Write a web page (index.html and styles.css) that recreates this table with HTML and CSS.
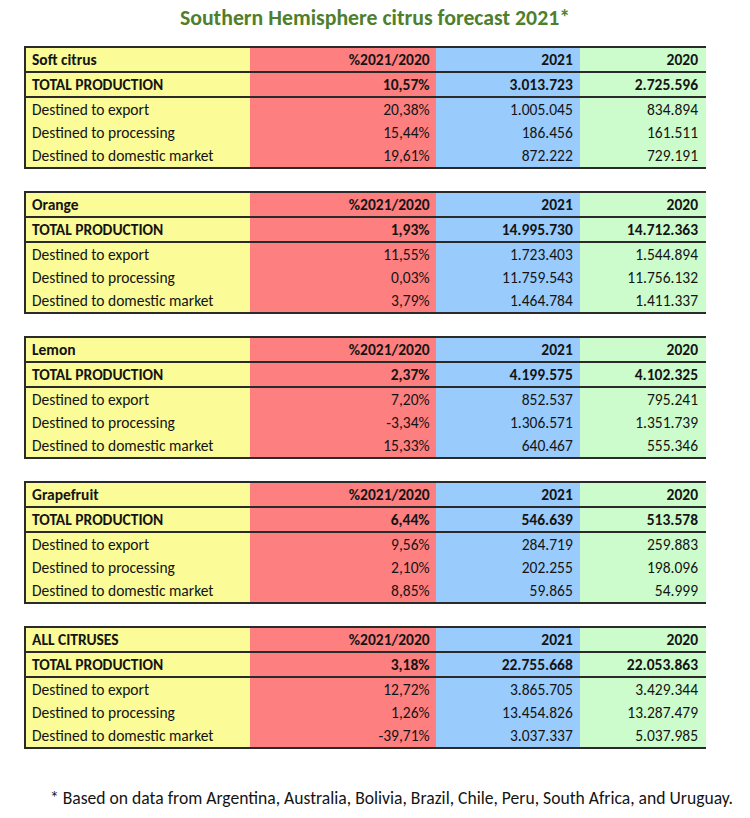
FILE: index.html
```html
<!DOCTYPE html>
<html lang="en">
<head>
<meta charset="utf-8">
<title>Southern Hemisphere citrus forecast 2021</title>
<link rel="stylesheet" href="styles.css">
</head>
<body>
<div class="page">
  <h1 class="title">Southern Hemisphere citrus forecast 2021*</h1>
  <div class="tables">
    <table class="ct">
      <colgroup><col class="c1"><col class="c2"><col class="c3"><col class="c4"></colgroup>
      <tr class="head"><td>Soft citrus</td><td>%2021/2020</td><td>2021</td><td>2020</td></tr>
      <tr class="total"><td>TOTAL PRODUCTION</td><td>10,57%</td><td>3.013.723</td><td>2.725.596</td></tr>
      <tr class="d first"><td>Destined to export</td><td>20,38%</td><td>1.005.045</td><td>834.894</td></tr>
      <tr class="d"><td>Destined to processing</td><td>15,44%</td><td>186.456</td><td>161.511</td></tr>
      <tr class="d last"><td>Destined to domestic market</td><td>19,61%</td><td>872.222</td><td>729.191</td></tr>
    </table>
    <table class="ct">
      <colgroup><col class="c1"><col class="c2"><col class="c3"><col class="c4"></colgroup>
      <tr class="head"><td>Orange</td><td>%2021/2020</td><td>2021</td><td>2020</td></tr>
      <tr class="total"><td>TOTAL PRODUCTION</td><td>1,93%</td><td>14.995.730</td><td>14.712.363</td></tr>
      <tr class="d first"><td>Destined to export</td><td>11,55%</td><td>1.723.403</td><td>1.544.894</td></tr>
      <tr class="d"><td>Destined to processing</td><td>0,03%</td><td>11.759.543</td><td>11.756.132</td></tr>
      <tr class="d last"><td>Destined to domestic market</td><td>3,79%</td><td>1.464.784</td><td>1.411.337</td></tr>
    </table>
    <table class="ct">
      <colgroup><col class="c1"><col class="c2"><col class="c3"><col class="c4"></colgroup>
      <tr class="head"><td>Lemon</td><td>%2021/2020</td><td>2021</td><td>2020</td></tr>
      <tr class="total"><td>TOTAL PRODUCTION</td><td>2,37%</td><td>4.199.575</td><td>4.102.325</td></tr>
      <tr class="d first"><td>Destined to export</td><td>7,20%</td><td>852.537</td><td>795.241</td></tr>
      <tr class="d"><td>Destined to processing</td><td>-3,34%</td><td>1.306.571</td><td>1.351.739</td></tr>
      <tr class="d last"><td>Destined to domestic market</td><td>15,33%</td><td>640.467</td><td>555.346</td></tr>
    </table>
    <table class="ct">
      <colgroup><col class="c1"><col class="c2"><col class="c3"><col class="c4"></colgroup>
      <tr class="head"><td>Grapefruit</td><td>%2021/2020</td><td>2021</td><td>2020</td></tr>
      <tr class="total"><td>TOTAL PRODUCTION</td><td>6,44%</td><td>546.639</td><td>513.578</td></tr>
      <tr class="d first"><td>Destined to export</td><td>9,56%</td><td>284.719</td><td>259.883</td></tr>
      <tr class="d"><td>Destined to processing</td><td>2,10%</td><td>202.255</td><td>198.096</td></tr>
      <tr class="d last"><td>Destined to domestic market</td><td>8,85%</td><td>59.865</td><td>54.999</td></tr>
    </table>
    <table class="ct">
      <colgroup><col class="c1"><col class="c2"><col class="c3"><col class="c4"></colgroup>
      <tr class="head"><td>ALL CITRUSES</td><td>%2021/2020</td><td>2021</td><td>2020</td></tr>
      <tr class="total"><td>TOTAL PRODUCTION</td><td>3,18%</td><td>22.755.668</td><td>22.053.863</td></tr>
      <tr class="d first"><td>Destined to export</td><td>12,72%</td><td>3.865.705</td><td>3.429.344</td></tr>
      <tr class="d"><td>Destined to processing</td><td>1,26%</td><td>13.454.826</td><td>13.287.479</td></tr>
      <tr class="d last"><td>Destined to domestic market</td><td>-39,71%</td><td>3.037.337</td><td>5.037.985</td></tr>
    </table>
  </div>
  <p class="note">* Based on data from Argentina, Australia, Bolivia, Brazil, Chile, Peru, South Africa, and Uruguay.</p>
</div>
</body>
</html>
```
FILE: styles.css
```css
html, body {
  margin: 0;
  padding: 0;
  background: #ffffff;
}
body {
  font-family: Carlito, Calibri, "Open Sans", "Noto Sans", sans-serif;
  color: #141414;
  width: 750px;
  height: 818px;
  overflow: hidden;
}
.page {
  display: flex;
  flex-direction: column;
}
.title {
  margin: 5px 0 0 0;
  text-align: center;
  font-size: 21.8px;
  line-height: 26px;
  font-weight: bold;
  color: #4f7f2c;
}
.tables {
  display: flex;
  flex-direction: column;
  gap: 22px;
  margin: 15px 0 0 24px;
}
.ct {
  border-collapse: collapse;
  table-layout: fixed;
  width: 682px;
  font-size: 15.5px;
  border-left: 2px solid #2a2a2a;
  border-top: 2px solid #2a2a2a;
  border-bottom: 2px solid #2a2a2a;
}
.c1 { width: 225px; }
.c2 { width: 185px; }
.c3 { width: 144px; }
.c4 { width: 126px; }
.ct td {
  padding: 0 7px 0 6px;
  line-height: 18px;
  white-space: nowrap;
  overflow: hidden;
}
.ct td:nth-child(1) { background: #fbfb97; text-align: left; }
.ct td:nth-child(2) { background: #fe7f7f; text-align: right; padding-right: 6px; }
.ct td:nth-child(3) { background: #99cbfd; text-align: right; }
.ct td:nth-child(4) { background: #ccfccc; text-align: right; padding-right: 8px; }
.head td {
  height: 23px;
  font-weight: bold;
  border-bottom: 2px solid #2a2a2a;
}
.total td {
  height: 23px;
  font-weight: bold;
  border-bottom: 2px solid #2a2a2a;
}
.d td {
  height: 23px;
  font-weight: normal;
}
.note {
  margin: 38px 0 0 50px;
  font-size: 17.6px;
  line-height: 22px;
  color: #141414;
  white-space: nowrap;
}
```
